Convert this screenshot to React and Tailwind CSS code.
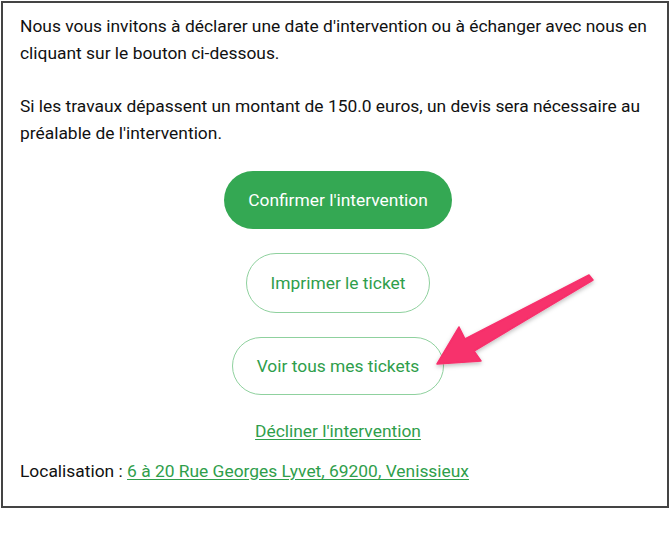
import React from "react";

export default function App() {
  return (
    <div className="relative w-[670px] h-[535px] bg-white" style={{ fontFamily: "Roboto, 'Noto Sans', sans-serif" }}>
      <div className="absolute left-[1px] top-[1px] w-[668px] h-[507px] border-2 border-[#444] box-border">
        <div className="pl-[17px] pr-[11px] pt-[10px] text-[17.4px] leading-[27px] text-[#111]">
          <p>
            Nous vous invitons à déclarer une date d'intervention ou à échanger avec nous en cliquant sur le bouton ci-dessous.
          </p>
          <p className="mt-[26px]">
            Si les travaux dépassent un montant de 150.0 euros, un devis sera nécessaire au préalable de l'intervention.
          </p>
          <div className="flex flex-col items-center mt-[24px] gap-[24px]">
            <button className="h-[58px] px-6 rounded-full bg-[#34a853] text-white text-[17.4px]">
              Confirmer l'intervention
            </button>
            <button className="h-[60px] px-6 rounded-full border border-[#8fd19e] text-[#2f9e4b] text-[17.4px] bg-white">
              Imprimer le ticket
            </button>
            <button className="h-[58px] px-6 rounded-full border border-[#8fd19e] text-[#2f9e4b] text-[17.4px] bg-white">
              Voir tous mes tickets
            </button>
          </div>
          <div className="mt-[23px] text-center">
            <a href="#" className="text-[#2f9e4b] underline underline-offset-2">Décliner l'intervention</a>
          </div>
          <p className="mt-[13px]">
            Localisation :{" "}
            <a href="#" className="text-[#2f9e4b] underline underline-offset-2">6 à 20 Rue Georges Lyvet, 69200, Venissieux</a>
          </p>
        </div>
      </div>
      <svg className="absolute left-0 top-0 pointer-events-none" width="670" height="535" viewBox="0 0 670 535">
        <defs>
          <filter id="sh" x="-20%" y="-20%" width="140%" height="140%">
            <feDropShadow dx="0" dy="2" stdDeviation="2" floodColor="#000" floodOpacity="0.25" />
          </filter>
        </defs>
        <polygon
          points="589,275 593,280 474,351 481,361 437,364 459,327 465,339"
          fill="#f7306c"
          stroke="#f7306c"
          strokeWidth="1.5"
          strokeLinejoin="round"
          filter="url(#sh)"
        />
      </svg>
    </div>
  );
}
